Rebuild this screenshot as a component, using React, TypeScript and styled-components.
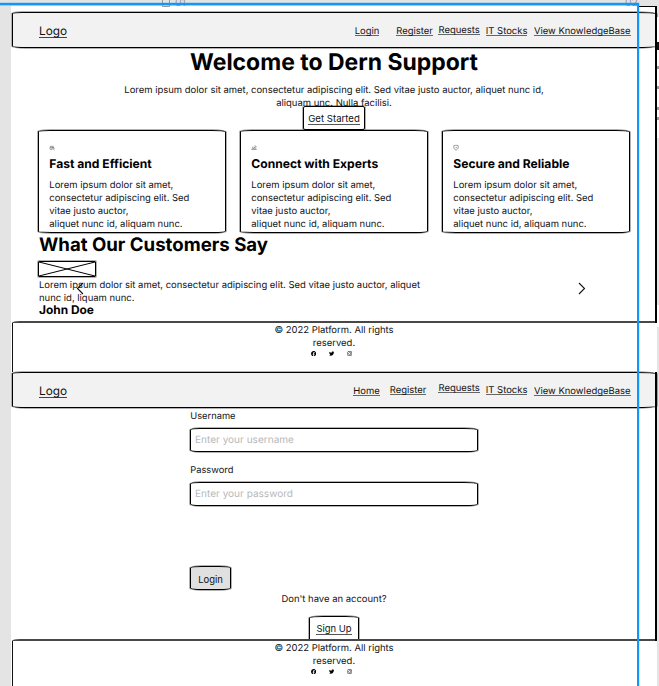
import React from "react";
import styled, { createGlobalStyle, css } from "styled-components";
import { FaFacebook, FaTwitter, FaInstagram } from "react-icons/fa";

const Global = createGlobalStyle`
  * { box-sizing: border-box; }
  body { margin: 0; background: #e4e4e4; }
  h1, h2, h3, p { margin: 0; }
`;

const sketch = css`
  border: 1px solid #000;
  box-shadow: 0 0 0 1px rgba(0, 0, 0, 0.3);
`;

const Canvas = styled.main`
  position: relative;
  width: 659px;
  height: 686px;
  overflow: hidden;
  background: #e4e4e4;
  display: grid;
  grid-template-columns: 11px 646px 2px;
  font-family: "Inter", sans-serif;
  font-size: 9.46px;
  line-height: 13px;
  text-rendering: geometricPrecision;
  color: #111;
`;

const Board = styled.div`
  grid-column: 2;
  margin-top: 6px;
  padding-top: 6px;
  background: #fff;
  display: flex;
  flex-direction: column;
`;

const Header = styled.header`
  ${sketch}
  flex: none;
  height: 36px;
  margin-left: 1px;
  padding: 0 25.5px 0 26px;
  background: #f2f2f2;
  border-radius: 10px 22px 22px 14px / 1.5px 2px 2px 2px;
  display: flex;
  justify-content: space-between;
`;

const Logo = styled.a`
  align-self: flex-start;
  margin-top: 12px;
  height: 13px;
  font-size: 11.8px;
  line-height: 13px;
  border-bottom: 1px solid #444;
`;

const Nav = styled.nav`
  display: flex;
`;

const NavLink = styled.a<{ $gap: number; $top: number }>`
  height: 11px;
  margin-top: ${(p) => p.$top}px;
  margin-left: ${(p) => p.$gap}px;
  line-height: 13px;
  white-space: nowrap;
  border-bottom: 1px solid #666;
`;

const Hero = styled.section`
  flex: none;
  height: 82px;
  display: flex;
  flex-direction: column;
  align-items: center;
  text-align: center;
`;

const Title = styled.h1`
  font-size: 22.96px;
  line-height: 28px;
  font-weight: 700;
  color: #000;
  white-space: nowrap;
`;

const Lead = styled.p`
  width: 430px;
  margin-top: 8px;
`;

const StartButton = styled.button`
  ${sketch}
  width: 62px;
  height: 24px;
  flex: none;
  display: flex;
  justify-content: center;
  align-items: flex-start;
  margin-top: -4px;
  padding: 6px 0 0;
  font: inherit;
  line-height: 13px;
  color: #111;
  background: transparent;
  border-radius: 2px;
`;

const Underlined = styled.span<{ $size?: number }>`
  display: block;
  height: 12px;
  font-size: ${(p) => p.$size ?? 9.45}px;
  line-height: 12px;
  border-bottom: 1px solid #555;
`;

const Cards = styled.section`
  flex: none;
  display: grid;
  grid-template-columns: repeat(3, 188px);
  column-gap: 14px;
  padding-left: 27px;
`;

const Card = styled.article`
  ${sketch}
  height: 103px;
  padding: 13px 0 0 10.3px;
  background: #fff;
  border-radius: 12px 14px 12px 14px / 1.5px 2px 2px 1.5px;
  white-space: pre-line;
`;

const CardIcon = styled.svg`
  display: block;
  width: 6px;
  height: 7px;
  fill: none;
  stroke: #666;
  stroke-width: 0.6;
`;

const CardTitle = styled.h3`
  margin-top: 5px;
  font-size: 12.1px;
  line-height: 16px;
  font-weight: 700;
  color: #000;
`;

const CardText = styled.p`
  margin-top: 7px;
  line-height: 13.1px;
`;

const Testimonials = styled.section`
  position: relative;
  flex: none;
  height: 88px;
  padding-left: 28px;
`;

const SectionTitle = styled.h2`
  font-size: 18.62px;
  line-height: 24px;
  font-weight: 700;
  color: #000;
`;

const Placeholder = styled.div`
  ${sketch}
  width: 58px;
  height: 16px;
  margin: 4px 0 2px -1px;
  border-radius: 1px;
  svg { display: block; width: 100%; height: 100%; }
`;

const Quote = styled.p`
  width: 390px;
`;

const Author = styled.h3`
  margin-top: -2px;
  font-size: 11.93px;
  line-height: 14px;
  font-weight: 700;
  color: #000;
`;

const Arrow = styled.svg<{ $x: number }>`
  position: absolute;
  top: 49px;
  left: ${(p) => p.$x}px;
  width: 8px;
  height: 13px;
  fill: none;
  stroke: #111;
  stroke-width: 1.1;
`;

const FooterBar = styled.footer<{ $height: number }>`
  flex: none;
  height: ${(p) => p.$height}px;
  margin-left: 1px;
  padding: 1px 2px 0 0;
  border-top: 2px solid #484848;
  border-left: 1px solid #111;
  border-radius: 8px 0 0 0 / 2px 0 0 0;
  display: flex;
  flex-direction: column;
  align-items: center;
  text-align: center;
`;

const Copyright = styled.p`
  width: 130px;
`;

const Socials = styled.div`
  display: flex;
  gap: 12.5px;
  margin: 1px 0 0 -5px;
  font-size: 5.3px;
  line-height: 5px;
  color: #000;
`;

const Form = styled.form`
  flex: none;
  height: 231px;
  padding: 2px 0 0 179px;
  display: flex;
  flex-direction: column;
  align-items: flex-start;
`;

const Label = styled.label`
  height: 17px;
  padding-left: 0.3px;
  font-size: 9.3px;
  line-height: 13px;
`;

const Input = styled.input`
  ${sketch}
  width: 288px;
  height: 24px;
  margin: 1px 0 12px;
  padding: 0 4px 1px;
  font-family: inherit;
  font-size: 10.05px;
  text-rendering: geometricPrecision;
  background: #fff;
  border-radius: 10px 14px 12px 10px / 2px;
  outline: none;
  &::placeholder { color: #b8b8b8; opacity: 1; }
`;

const LoginButton = styled.button`
  ${sketch}
  width: 41px;
  height: 24px;
  margin-top: 48px;
  padding: 2px 0 0;
  font: inherit;
  color: #111;
  background: #e0e0e0;
  border-radius: 12px / 2px;
`;

const SignUpBlock = styled.div`
  align-self: center;
  margin: 3px 0 0 -179px;
  display: flex;
  flex-direction: column;
  align-items: center;
`;

const SignUpButton = styled(StartButton)`
  width: 50px;
  height: 23px;
  margin-top: 10px;
  border-bottom: 0;
  border-radius: 14px 14px 0 0 / 2px 2px 0 0;
`;

const FrameEdge = styled.div<{ $top: number; $height: number }>`
  position: absolute;
  left: 655px;
  top: ${(p) => p.$top}px;
  width: 2px;
  height: ${(p) => p.$height}px;
  background: #000;
`;

const FrameTop = styled.div`
  position: absolute;
  left: 639px;
  top: 6px;
  width: 18px;
  height: 1px;
  background: #000;
`;

const NextFrame = styled.div<{ $top: number; $height: number }>`
  position: absolute;
  left: 657px;
  top: ${(p) => p.$top}px;
  width: 2px;
  height: ${(p) => p.$height}px;
  overflow: hidden;
  background: #fff;
`;

const NextFrameMark = styled.i<{ $gap: number; $tall?: boolean }>`
  display: block;
  width: 2px;
  height: ${(p) => (p.$tall ? 8 : 3)}px;
  margin-top: ${(p) => p.$gap}px;
  background: ${(p) => (p.$tall ? "#111" : "#999")};
`;

const FrameLabel = styled.span<{ $x: number }>`
  position: absolute;
  top: -4px;
  left: ${(p) => p.$x}px;
  display: flex;
  gap: 5px;
  font-size: 10.5px;
  line-height: 14px;
  color: #999;
  svg { width: 8px; height: 11px; fill: none; stroke: #999; }
`;

const Selection = styled.div`
  position: absolute;
  top: 3px;
  left: -4px;
  width: 643px;
  height: 700px;
  border: 2px solid #1296f8;
  box-shadow: 0 0 0 0.5px rgba(18, 150, 248, 0.4), inset 0 1px 0 rgba(18, 150, 248, 0.3);
  pointer-events: none;
`;

type LinkItem = { text: string; gap: number; top: number };

const homeLinks: LinkItem[] = [
  { text: "Login", gap: 0, top: 12 },
  { text: "Register", gap: 17, top: 12 },
  { text: "Requests", gap: 5.5, top: 11 },
  { text: "IT Stocks", gap: 6, top: 12 },
  { text: "View KnowledgeBase", gap: 6.5, top: 12 },
];

const loginLinks: LinkItem[] = [
  { text: "Home", gap: 0, top: 12 },
  { text: "Register", gap: 10, top: 11 },
  { text: "Requests", gap: 12, top: 9 },
  { text: "IT Stocks", gap: 6, top: 11 },
  { text: "View KnowledgeBase", gap: 6.5, top: 12 },
];

const CloudIcon = () => (
  <CardIcon viewBox="0 0 6 7">
    <path d="M3 5.300H1V3.300h4M1.400 3.300v-1h3M4 3.200c-1.600 0-1.600 2 0 2s1.600-2 0-2zM4.500 5l1 .8" />
  </CardIcon>
);

const PeopleIcon = () => (
  <CardIcon viewBox="0 0 6 7">
    <path d="M.3 5.500h5.400M1 5l.7-1.500L3 5M3 5l.6-2 1.500 2M1.500 3h1M3.500 2h1.500v1.500" />
  </CardIcon>
);

const ShieldIcon = () => (
  <CardIcon viewBox="0 0 6 7">
    <path d="M.8 1.700L3 1.200l2.200.5v2.200C5 5 4 5.700 3 6.200 2 5.700 1 5 .8 3.900zM2 3.400l.8.8L4.200 3" />
  </CardIcon>
);

const body =
  "Lorem ipsum dolor sit amet,\nconsectetur adipiscing elit. Sed\nvitae justo auctor,\naliquet nunc id, aliquam nunc.";

const features = [
  { title: "Fast and Efficient", Icon: CloudIcon },
  { title: "Connect with Experts", Icon: PeopleIcon },
  { title: "Secure and Reliable", Icon: ShieldIcon },
];

const TopBar = ({ links }: { links: LinkItem[] }) => (
  <Header>
    <Logo>Logo</Logo>
    <Nav>
      {links.map((l) => (
        <NavLink key={l.text} $gap={l.gap} $top={l.top}>{l.text}</NavLink>
      ))}
    </Nav>
  </Header>
);

const Footer = ({ height }: { height: number }) => (
  <FooterBar $height={height}>
    <Copyright>© 2022 Platform. All rights<br />reserved.</Copyright>
    <Socials><FaFacebook /><FaTwitter /><FaInstagram /></Socials>
  </FooterBar>
);

export default function App() {
  return (
    <>
      <Global />
      <Canvas>
        <Board>
          <TopBar links={homeLinks} />
          <Hero>
            <Title>Welcome to Dern Support</Title>
            <Lead>
              Lorem ipsum dolor sit amet, consectetur adipiscing elit. Sed vitae justo auctor, aliquet nunc id,
              <br />aliquam unc. Nulla facilisi.
            </Lead>
            <StartButton><Underlined $size={9.6}>Get Started</Underlined></StartButton>
          </Hero>
          <Cards>
            {features.map(({ title, Icon }) => (
              <Card key={title}>
                <Icon />
                <CardTitle>{title}</CardTitle>
                <CardText>{body}</CardText>
              </Card>
            ))}
          </Cards>
          <Testimonials>
            <SectionTitle>What Our Customers Say</SectionTitle>
            <Placeholder>
              <svg viewBox="0 0 56 14" preserveAspectRatio="none" stroke="#000" strokeWidth="1">
                <path d="M0 0L56 14M56 0L0 14" />
              </svg>
            </Placeholder>
            <Quote>
              Lorem ipsum dolor sit amet, consectetur adipiscing elit. Sed vitae justo auctor, aliquet
              <br />nunc id, liquam nunc.
            </Quote>
            <Author>John Doe</Author>
            <Arrow $x={65} viewBox="0 0 8 13"><path d="M7 1L1.500 6.500L7 12" /></Arrow>
            <Arrow $x={567} viewBox="0 0 8 13"><path d="M1 1l5.500 5.500L1 12" /></Arrow>
          </Testimonials>
          <Footer height={51} />
          <TopBar links={loginLinks} />
          <Form>
            <Label>Username</Label>
            <Input placeholder="Enter your username" />
            <Label>Password</Label>
            <Input placeholder="Enter your password" />
            <LoginButton type="button">Login</LoginButton>
            <SignUpBlock>
              <span>Don't have an account?</span>
              <SignUpButton type="button"><Underlined>Sign Up</Underlined></SignUpButton>
            </SignUpBlock>
          </Form>
          <Footer height={60} />
        </Board>
        <FrameTop />
        <FrameEdge $top={6} $height={317} />
        <FrameEdge $top={372} $height={269} />
        <NextFrame $top={17} $height={121}>
          <NextFrameMark $gap={25} $tall />
          <NextFrameMark $gap={16} />
          <NextFrameMark $gap={17} />
          <NextFrameMark $gap={18} />
          <NextFrameMark $gap={7} />
        </NextFrame>
        <NextFrame $top={305} $height={22} />
        <FrameLabel $x={162}>
          <svg viewBox="0 0 8 11"><path d="M.5 1v9.500h7V1z" /></svg>01
        </FrameLabel>
        <FrameLabel $x={625}>02</FrameLabel>
        <Selection />
      </Canvas>
    </>
  );
}
